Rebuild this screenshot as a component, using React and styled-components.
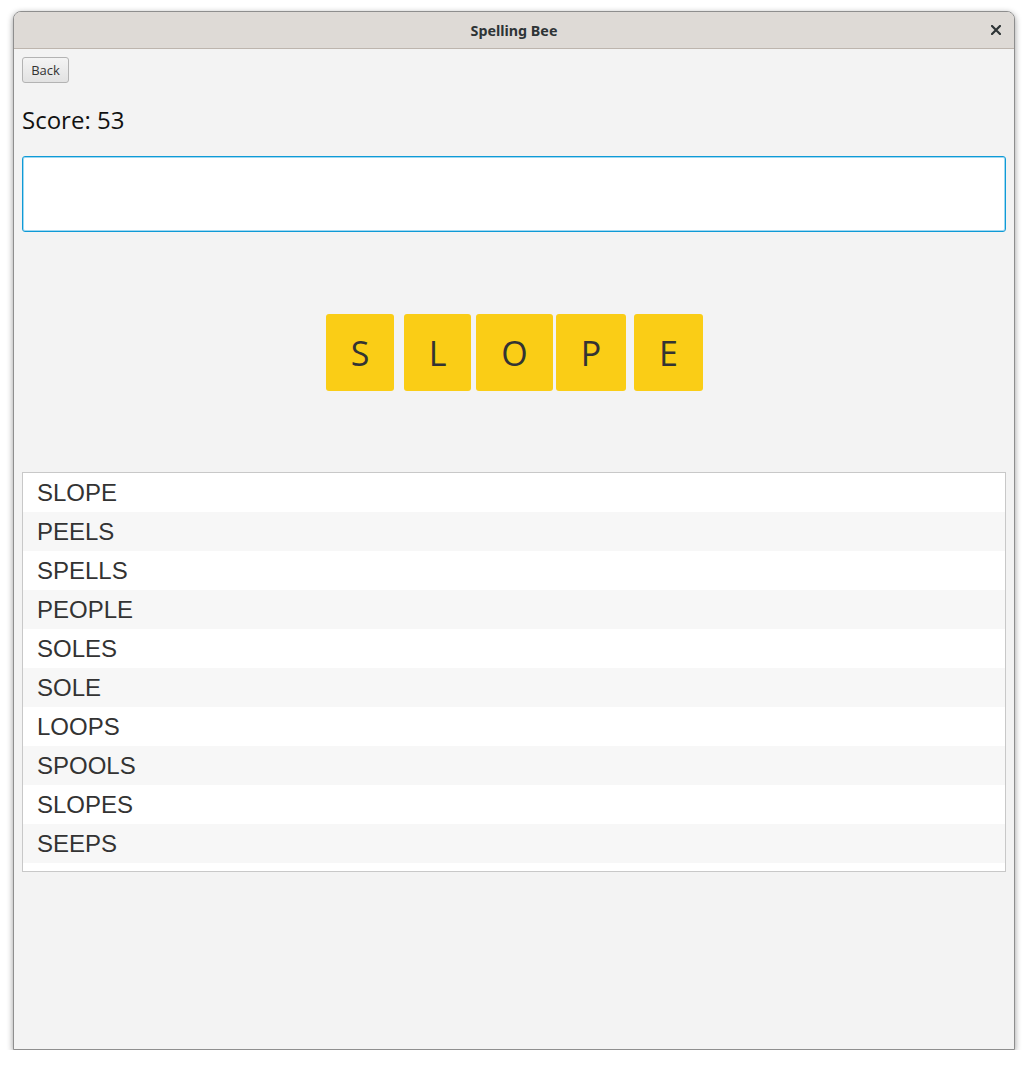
import styled, { createGlobalStyle } from "styled-components";

const Global = createGlobalStyle`
    html, body {
        margin: 0;
        padding: 0;
        background: #ffffff;
    }
    * { box-sizing: border-box; }
`;

const Window = styled.div`
    margin: 11px 0 0 13px;
    width: 1002px;
    height: 1039px;
    display: flex;
    flex-direction: column;
    background: #f3f3f3;
    border: 1px solid #8e8e8e;
    border-radius: 8px 8px 0 0;
    box-shadow: 0 2px 6px rgba(0, 0, 0, 0.4);
    overflow: hidden;
`;

const TitleBar = styled.div`
    height: 37px;
    flex-shrink: 0;
    display: flex;
    align-items: center;
    justify-content: center;
    position: relative;
    background: #dedad6;
    border-bottom: 1px solid #bdb5ae;
    font-family: "Noto Sans", "DejaVu Sans", sans-serif;
    font-weight: 700;
    font-size: 14.3px;
    color: #2e3436;
`;

const Close = styled.svg`
    position: absolute;
    right: 13px;
    top: 13px;
`;

const Content = styled.div`
    padding: 8px 8px 0 8px;
    display: flex;
    flex-direction: column;
`;

const BackButton = styled.button`
    align-self: flex-start;
    width: 47px;
    height: 26px;
    padding: 0;
    font-family: "Open Sans", "Noto Sans", sans-serif;
    font-size: 13px;
    color: #333;
    background: linear-gradient(#f4f4f4, #e2e2e2);
    border: 1px solid #b3b3b3;
    border-radius: 3px;
`;

const Score = styled.div`
    margin-top: 21px;
    font-family: "Open Sans", "Noto Sans", sans-serif;
    font-size: 24px;
    line-height: 32px;
    color: #111;
`;

const Input = styled.input`
    margin-top: 20px;
    width: 984px;
    height: 76px;
    border: 1px solid #0f9ad6;
    box-shadow: inset 0 0 0 1px #9fd8f1;
    border-radius: 3px;
    background: #fff;
    outline: none;
`;

const TileRow = styled.div`
    margin-top: 82px;
    display: flex;
    justify-content: center;
    padding-left: 1px;
`;

const Tile = styled.div`
    width: ${p => p.$w}px;
    margin-left: ${p => p.$ml}px;
    height: 77px;
    display: flex;
    align-items: center;
    justify-content: center;
    background: #facd16;
    border-radius: 3px;
    font-family: "Open Sans", "Noto Sans", sans-serif;
    font-size: 34px;
    color: #333;
`;

const WordList = styled.div`
    margin-top: 81px;
    width: 984px;
    height: 400px;
    background: #fff;
    border: 1px solid #c8c8c8;
`;

const Row = styled.div`
    height: 39px;
    padding-left: 14px;
    display: flex;
    align-items: center;
    background: ${p => (p.$odd ? "#f7f7f7" : "#ffffff")};
    font-family: "Liberation Sans", Arial, sans-serif;
    font-size: 24px;
    color: #333;
`;

const tiles = [
    { l: "S", w: 68, ml: 0 },
    { l: "L", w: 67, ml: 10 },
    { l: "O", w: 77, ml: 5 },
    { l: "P", w: 70, ml: 3 },
    { l: "E", w: 69, ml: 8 },
];

const words = ["SLOPE", "PEELS", "SPELLS", "PEOPLE", "SOLES", "SOLE", "LOOPS", "SPOOLS", "SLOPES", "SEEPS"];

export default function App() {
    return (
        <>
            <Global />
            <Window>
                <TitleBar>
                    Spelling Bee
                    <Close width="10" height="10" viewBox="0 0 10 10">
                        <path d="M1 1 L9 9 M9 1 L1 9" stroke="#2e3436" strokeWidth="2.2" strokeLinecap="square" />
                    </Close>
                </TitleBar>
                <Content>
                    <BackButton>Back</BackButton>
                    <Score>Score: 53</Score>
                    <Input />
                    <TileRow>
                        {tiles.map(t => (
                            <Tile key={t.l} $w={t.w} $ml={t.ml}>{t.l}</Tile>
                        ))}
                    </TileRow>
                    <WordList>
                        {words.map((w, i) => (
                            <Row key={w} $odd={i % 2 === 1}>{w}</Row>
                        ))}
                    </WordList>
                </Content>
            </Window>
        </>
    );
}
